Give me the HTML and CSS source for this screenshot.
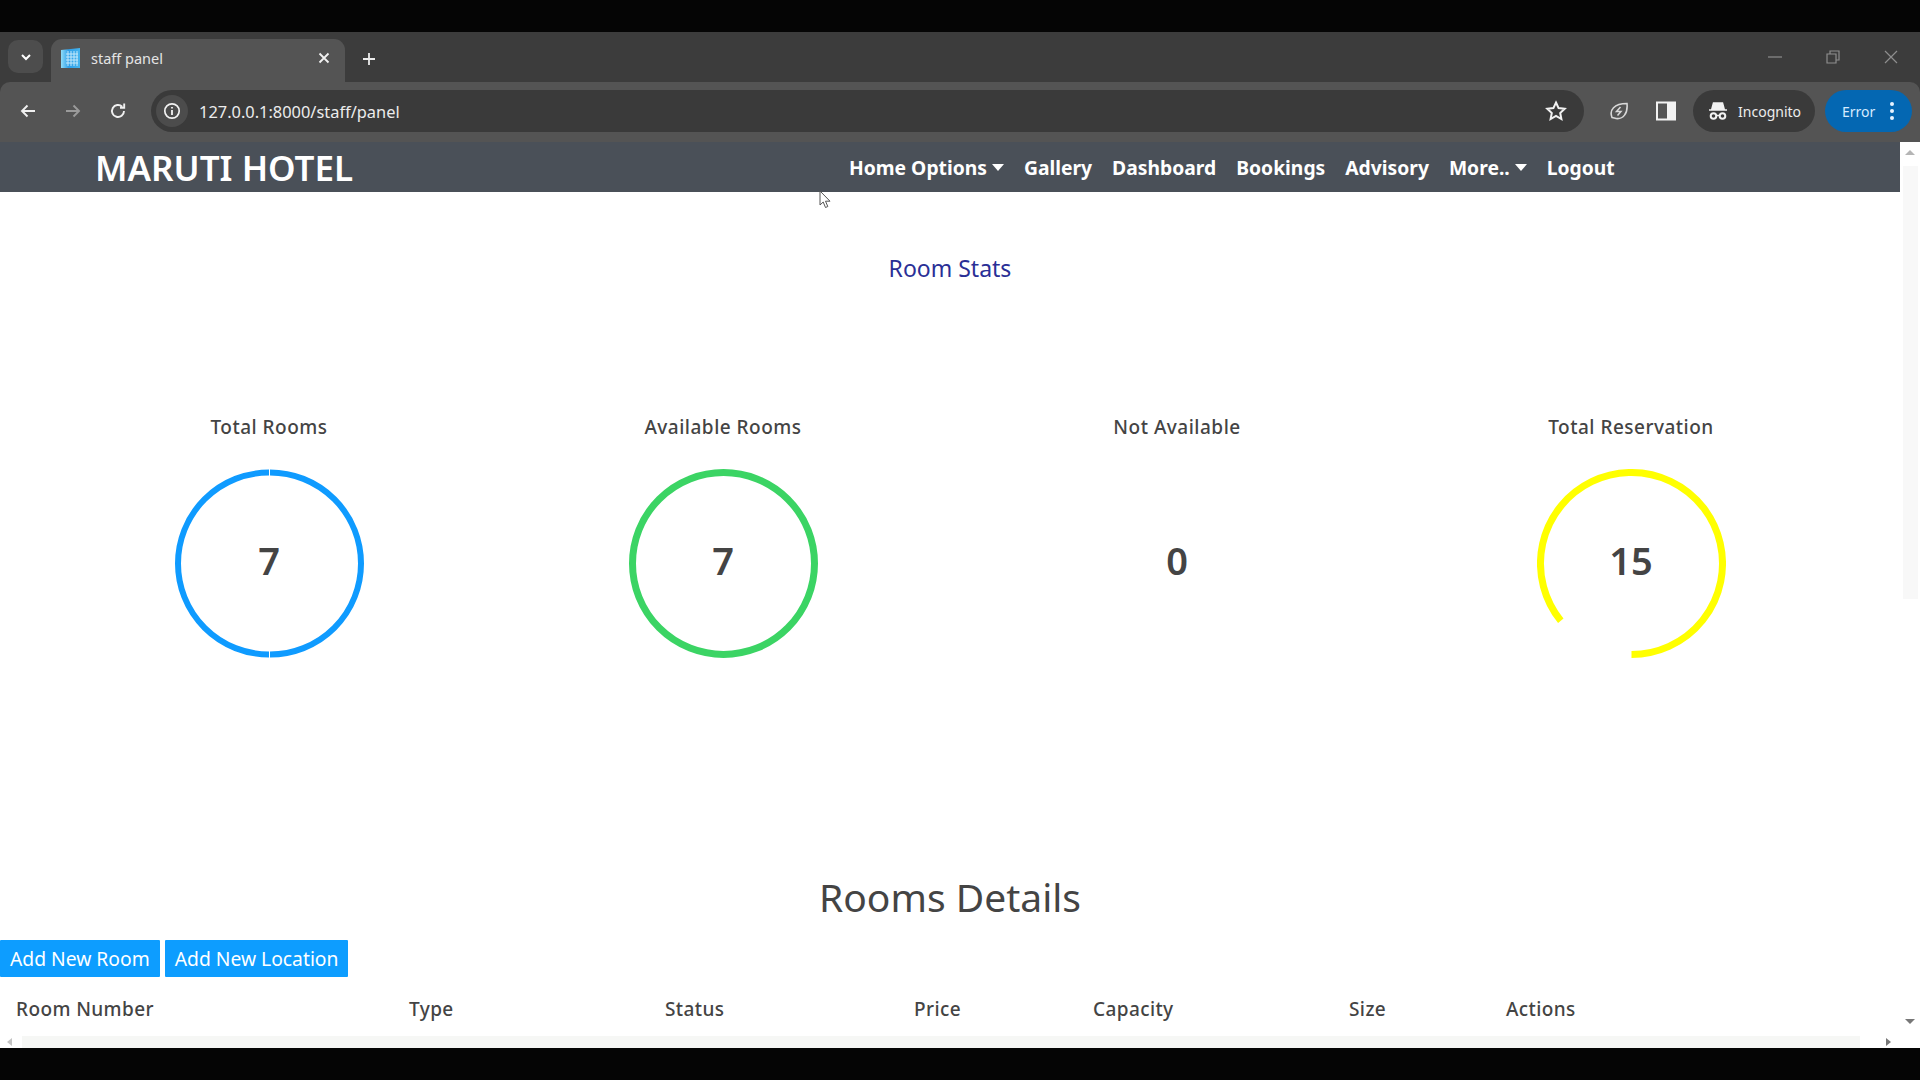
FILE: index.html
```html
<!DOCTYPE html>
<html lang="en">
<head>
  <meta charset="UTF-8">
  <title>staff panel</title>
  <link rel="stylesheet" href="styles.css">
</head>
<body>
  <div class="screen">
    <div class="chrome">
      <div class="tabstrip">
        <div class="tab-search">
          <svg width="14" height="14" viewBox="0 0 14 14"><path d="M3 5l4 4 4-4" fill="none" stroke="#fff" stroke-width="2"/></svg>
        </div>
        <div class="tab">
          <svg class="favicon" width="21" height="22" viewBox="0 0 21 22">
            <defs>
              <linearGradient id="fav" x1="0" y1="0" x2="1" y2="0">
                <stop offset="0" stop-color="#8fdcf8"/>
                <stop offset="0.4" stop-color="#2f9fe8"/>
                <stop offset="1" stop-color="#45b4ee"/>
              </linearGradient>
            </defs>
            <path d="M1 3l19-2v20H1z" fill="url(#fav)"/>
            <path d="M8 4v15M11 4v15M14 4v15M17 4v15M6 7h12M6 10h12M6 13h12M6 16h12" stroke="#c4e9fb" stroke-width="1"/>
          </svg>
          <span class="tab-title">staff panel</span>
          <svg class="tab-close" width="12" height="12" viewBox="0 0 12 12"><path d="M1.5 1.5l9 9M10.5 1.5l-9 9" stroke="#f2f2f2" stroke-width="1.8"/></svg>
        </div>
        <svg class="new-tab" width="14" height="14" viewBox="0 0 14 14"><path d="M7 1v12M1 7h12" stroke="#ececec" stroke-width="1.8"/></svg>
        <div class="win-controls">
          <svg width="14" height="14" viewBox="0 0 14 14"><path d="M0 7h14" stroke="#8e8e8e" stroke-width="1.2"/></svg>
          <svg width="14" height="14" viewBox="0 0 14 14"><path d="M1 4h9v9H1zM4 4V1h9v9h-3" fill="none" stroke="#8e8e8e" stroke-width="1.2"/></svg>
          <svg width="14" height="14" viewBox="0 0 14 14"><path d="M1 1l12 12M13 1L1 13" stroke="#8e8e8e" stroke-width="1.2"/></svg>
        </div>
      </div>
      <div class="toolbar">
        <div class="nav-btns">
          <svg width="18" height="18" viewBox="0 0 18 18"><path d="M16 9H3M8.500 3.500L3 9l5.500 5.500" fill="none" stroke="#f0f0f0" stroke-width="1.900"/></svg>
          <svg width="18" height="18" viewBox="0 0 18 18"><path d="M2 9h13M9.500 3.500L15 9l-5.500 5.500" fill="none" stroke="#9a9a9a" stroke-width="1.900"/></svg>
          <svg width="18" height="18" viewBox="0 0 18 18"><path d="M15 9a6 6 0 1 1-1.800-4.300M15.200 1.500v4.200H11" fill="none" stroke="#f0f0f0" stroke-width="1.900"/></svg>
        </div>
        <div class="omnibox">
          <div class="site-info">
            <svg width="18" height="18" viewBox="0 0 18 18"><circle cx="9" cy="9" r="7.200" fill="none" stroke="#f2f2f2" stroke-width="1.700"/><path d="M9 8v5M9 5v1.600" stroke="#f2f2f2" stroke-width="1.800"/></svg>
          </div>
          <span class="url">127.0.0.1:8000/staff/panel</span>
          <svg class="star" width="22" height="22" viewBox="0 0 22 22"><path d="M11 2.500l2.600 5.600 6.100.7-4.500 4.200 1.200 6-5.400-3-5.400 3 1.200-6-4.500-4.200 6.100-.7z" fill="none" stroke="#f2f2f2" stroke-width="2"/></svg>
        </div>
        <svg class="tool-icon leaf" width="20" height="20" viewBox="0 0 20 20"><path d="M3 16.500C0 9 5 2.500 18 2.500c1 10-4 16-11 15-1.500-.3-2.500-.8-4-1z" fill="none" stroke="#d8d8d8" stroke-width="1.600"/><path d="M11.500 6l-4 4.500h4.500L8.500 14.500" fill="none" stroke="#d8d8d8" stroke-width="1.500"/></svg>
        <svg class="tool-icon panel" width="20" height="20" viewBox="0 0 20 20"><rect x="1" y="1.500" width="18" height="17" fill="none" stroke="#f2f2f2" stroke-width="2"/><rect x="11" y="1.500" width="8" height="17" fill="#f2f2f2"/></svg>
        <div class="incognito">
          <svg width="20" height="20" viewBox="0 0 20 20"><path d="M5.500 2h9l1.500 5.500H4zM1 9h18" fill="#f2f2f2" stroke="#f2f2f2" stroke-width="1.500"/><circle cx="5.500" cy="15" r="2.800" fill="none" stroke="#f2f2f2" stroke-width="2"/><circle cx="14.500" cy="15" r="2.800" fill="none" stroke="#f2f2f2" stroke-width="2"/><path d="M8.500 14.500h3" stroke="#f2f2f2" stroke-width="1.500"/></svg>
          <span>Incognito</span>
        </div>
        <div class="error-pill">
          <span>Error</span>
          <svg width="6" height="20" viewBox="0 0 6 20"><circle cx="3" cy="3" r="2" fill="#e8f3ff"/><circle cx="3" cy="10" r="2" fill="#e8f3ff"/><circle cx="3" cy="17" r="2" fill="#e8f3ff"/></svg>
        </div>
      </div>
    </div>

    <div class="viewport">
      <div class="page">
        <nav class="navbar">
          <a class="brand">MARUTI HOTEL</a>
          <ul class="nav-links">
            <li class="caret">Home Options</li>
            <li>Gallery</li>
            <li>Dashboard</li>
            <li>Bookings</li>
            <li>Advisory</li>
            <li class="caret">More..</li>
            <li>Logout</li>
          </ul>
        </nav>

        <h2 class="stats-title">Room Stats</h2>

        <div class="stats">
          <div class="stat">
            <div class="stat-label">Total Rooms</div>
            <div class="ring">
              <svg width="189" height="189" viewBox="0 0 189 189" fill="none" stroke="#0f9bff" stroke-width="6">
                <path d="M95 3.500A91 91 0 0 1 95 185.500"/>
                <path d="M94 185.500A91 91 0 0 1 94 3.500"/>
              </svg>
              <div class="stat-num">7</div>
            </div>
          </div>
          <div class="stat">
            <div class="stat-label">Available Rooms</div>
            <div class="ring">
              <svg width="189" height="189" viewBox="0 0 189 189" fill="none" stroke="#3bd464" stroke-width="7">
                <circle cx="94.500" cy="94.500" r="91"/>
              </svg>
              <div class="stat-num">7</div>
            </div>
          </div>
          <div class="stat">
            <div class="stat-label">Not Available</div>
            <div class="ring">
              <div class="stat-num">0</div>
            </div>
          </div>
          <div class="stat">
            <div class="stat-label">Total Reservation</div>
            <div class="ring">
              <svg width="189" height="189" viewBox="0 0 189 189" fill="none" stroke="#ffff00" stroke-width="7">
                <path d="M94.500 185.500A91 91 0 1 0 23.800 151.800"/>
              </svg>
              <div class="stat-num">15</div>
            </div>
          </div>
        </div>

        <h1 class="rooms-title">Rooms Details</h1>

        <div class="actions">
          <button class="btn">Add New Room</button>
          <button class="btn">Add New Location</button>
        </div>

        <table class="rooms-table">
          <thead>
            <tr>
              <th class="col-number">Room Number</th>
              <th class="col-type">Type</th>
              <th class="col-status">Status</th>
              <th class="col-price">Price</th>
              <th class="col-capacity">Capacity</th>
              <th class="col-size">Size</th>
              <th>Actions</th>
            </tr>
          </thead>
        </table>

        <svg class="cursor" width="12" height="19" viewBox="0 0 12 19"><path d="M1 1v14l3.200-3 2.300 5.500 2.300-1-2.300-5.300H11z" fill="#fff" stroke="#555" stroke-width="1"/></svg>
      </div>

      <div class="vscroll">
        <div class="arrow-up"></div>
        <div class="vtrack"></div>
        <div class="arrow-down"></div>
      </div>
    </div>

    <div class="hscroll">
      <div class="arrow-left"></div>
      <div class="htrack"></div>
      <div class="arrow-right"></div>
    </div>
  </div>
</body>
</html>
```

FILE: styles.css
```css
:root {
  --strip: #3c3c3c;
  --bar: #545454;
  --field: #3a3a3a;
  --navbar: #4a5058;
  --text: #444444;
  --blue: #0d9dff;
}

* {
  box-sizing: border-box;
}

html, body {
  margin: 0;
  height: 100%;
  overflow: hidden;
}

body {
  background-color: #050505;
  font-family: "Noto Sans", "Open Sans", sans-serif;
  color: var(--text);
}

.screen {
  height: 1080px;
  padding: 32px 0;
  display: flex;
  flex-direction: column;
}

/* browser frame */
.chrome {
  height: 110px;
  background-color: var(--strip);
  flex: none;
}

.tabstrip {
  height: 50px;
  display: flex;
  align-items: flex-end;
  position: relative;
}

.tab-search {
  width: 35px;
  height: 33px;
  margin: 0 8px 9px 8px;
  border-radius: 10px;
  background-color: #4d4d4d;
  display: flex;
  align-items: center;
  justify-content: center;
}

.tab {
  width: 294px;
  height: 43px;
  background-color: var(--bar);
  border-radius: 11px 11px 0 0;
  display: flex;
  align-items: center;
  padding: 0 9px 6px 9px;
}

.favicon {
  flex: none;
}

.tab-title {
  margin-left: 10px;
  font-size: 14.5px;
  color: #e4e4e4;
  flex: 1;
}

.tab-close {
  margin-right: 6px;
}

.new-tab {
  margin: 0 0 16px 17px;
}

.win-controls {
  margin-left: auto;
  display: flex;
  gap: 44px;
  padding: 0 22px 18px 0;
}

.toolbar {
  height: 60px;
  background-color: var(--bar);
  border-radius: 10px 10px 0 0;
  display: flex;
  align-items: center;
  padding: 0 8px 2px 19px;
}

.nav-btns {
  display: flex;
  gap: 27px;
}

.omnibox {
  width: 1434px;
  height: 42px;
  margin-left: 24px;
  background-color: var(--field);
  border-radius: 21px;
  display: flex;
  align-items: center;
  padding-left: 5px;
}

.site-info {
  width: 32px;
  height: 32px;
  border-radius: 50%;
  background-color: #4c4c4c;
  display: flex;
  align-items: center;
  justify-content: center;
}

.url {
  margin-left: 11px;
  font-size: 16.4px;
  color: #ececec;
}

.star {
  margin-left: auto;
  margin-right: 17px;
}

.tool-icon {
  flex: none;
}

.leaf {
  margin-left: 25px;
}

.panel {
  margin-left: 27px;
}

.incognito {
  width: 122px;
  height: 42px;
  margin-left: 17px;
  background-color: var(--field);
  border-radius: 21px;
  display: flex;
  align-items: center;
  gap: 10px;
  padding-left: 15px;
  font-size: 14px;
  color: #ececec;
}

.error-pill {
  width: 87px;
  height: 42px;
  margin-left: 10px;
  background-color: #0467b2;
  border-radius: 21px;
  display: flex;
  align-items: center;
  justify-content: space-between;
  padding: 0 17px 0 17px;
  font-size: 14px;
  color: #d6ebff;
}

/* page */
.viewport {
  height: 890px;
  display: flex;
  background-color: #fff;
  flex: none;
}

.page {
  width: 1900px;
  position: relative;
  overflow: hidden;
}

.navbar {
  height: 50px;
  background-color: var(--navbar);
  display: flex;
  align-items: center;
  padding-left: 95px;
}

.brand {
  font-size: 35px;
  font-weight: 600;
  color: #fff;
  width: 754px;
}

.nav-links {
  list-style: none;
  margin: 0;
  padding: 1px 0 0 0;
  display: flex;
  gap: 20px;
  font-size: 19.3px;
  font-weight: 700;
  color: #fff;
}

.caret::after {
  content: "";
  display: inline-block;
  margin-left: 5px;
  vertical-align: 4px;
  border-top: 7px solid #fff;
  border-left: 6px solid transparent;
  border-right: 6px solid transparent;
}

.stats-title {
  margin: 58px 0 0 0;
  line-height: 36px;
  font-size: 23px;
  font-weight: 400;
  color: #2a2f96;
  text-align: center;
}

.stats {
  margin-top: 127px;
  padding: 0 42px;
  display: grid;
  grid-template-columns: repeat(4, 1fr);
}

.stat {
  display: flex;
  flex-direction: column;
  align-items: center;
}

.stat-label {
  line-height: 28px;
  font-size: 19px;
  font-weight: 500;
  letter-spacing: 0.5px;
}

.ring {
  width: 189px;
  height: 189px;
  margin-top: 28px;
  display: grid;
  place-items: center;
}

.ring > * {
  grid-area: 1 / 1;
}

.stat-num {
  font-size: 38px;
  font-weight: 600;
  padding-bottom: 7px;
}

.rooms-title {
  margin: 211px 0 0 0;
  line-height: 56px;
  font-size: 39px;
  font-weight: 400;
  text-align: center;
}

.actions {
  margin-top: 15px;
  display: flex;
  gap: 5px;
}

.btn {
  height: 37px;
  padding: 0 10px;
  border: none;
  border-radius: 1px;
  background-color: var(--blue);
  color: #fff;
  font-family: inherit;
  font-size: 19.3px;
  white-space: nowrap;
}

.rooms-table {
  margin-top: 18px;
  border-collapse: collapse;
  table-layout: fixed;
  width: 1900px;
}

.rooms-table th {
  padding: 0 0 0 16px;
  height: 28px;
  line-height: 28px;
  font-size: 19px;
  font-weight: 500;
  letter-spacing: 0.4px;
  text-align: left;
}

.col-number { width: 393px; }
.col-type { width: 256px; }
.col-status { width: 249px; }
.col-price { width: 179px; }
.col-capacity { width: 256px; }
.col-size { width: 157px; }

.cursor {
  position: absolute;
  left: 819px;
  top: 48px;
}

/* scrollbars */
.vscroll {
  width: 20px;
  display: flex;
  flex-direction: column;
  align-items: center;
}

.arrow-up {
  margin-top: 8px;
  border-bottom: 5px solid #b5b5b5;
  border-left: 5px solid transparent;
  border-right: 5px solid transparent;
}

.vtrack {
  width: 15px;
  height: 433px;
  margin-top: 11px;
  background-color: #f8f8f8;
}

.arrow-down {
  margin-top: auto;
  margin-bottom: 8px;
  border-top: 5px solid #777;
  border-left: 5px solid transparent;
  border-right: 5px solid transparent;
}

.hscroll {
  height: 16px;
  padding-top: 4px;
  background-color: #fff;
  display: flex;
  align-items: center;
  flex: none;
}

.arrow-left {
  margin-left: 7px;
  border-right: 5px solid #c4c4c4;
  border-top: 4px solid transparent;
  border-bottom: 4px solid transparent;
}

.htrack {
  width: 1838px;
  height: 12px;
  margin-left: 10px;
  background-color: #f6f7f5;
}

.arrow-right {
  margin-left: 26px;
  border-left: 5px solid #777;
  border-top: 4px solid transparent;
  border-bottom: 4px solid transparent;
}
```
